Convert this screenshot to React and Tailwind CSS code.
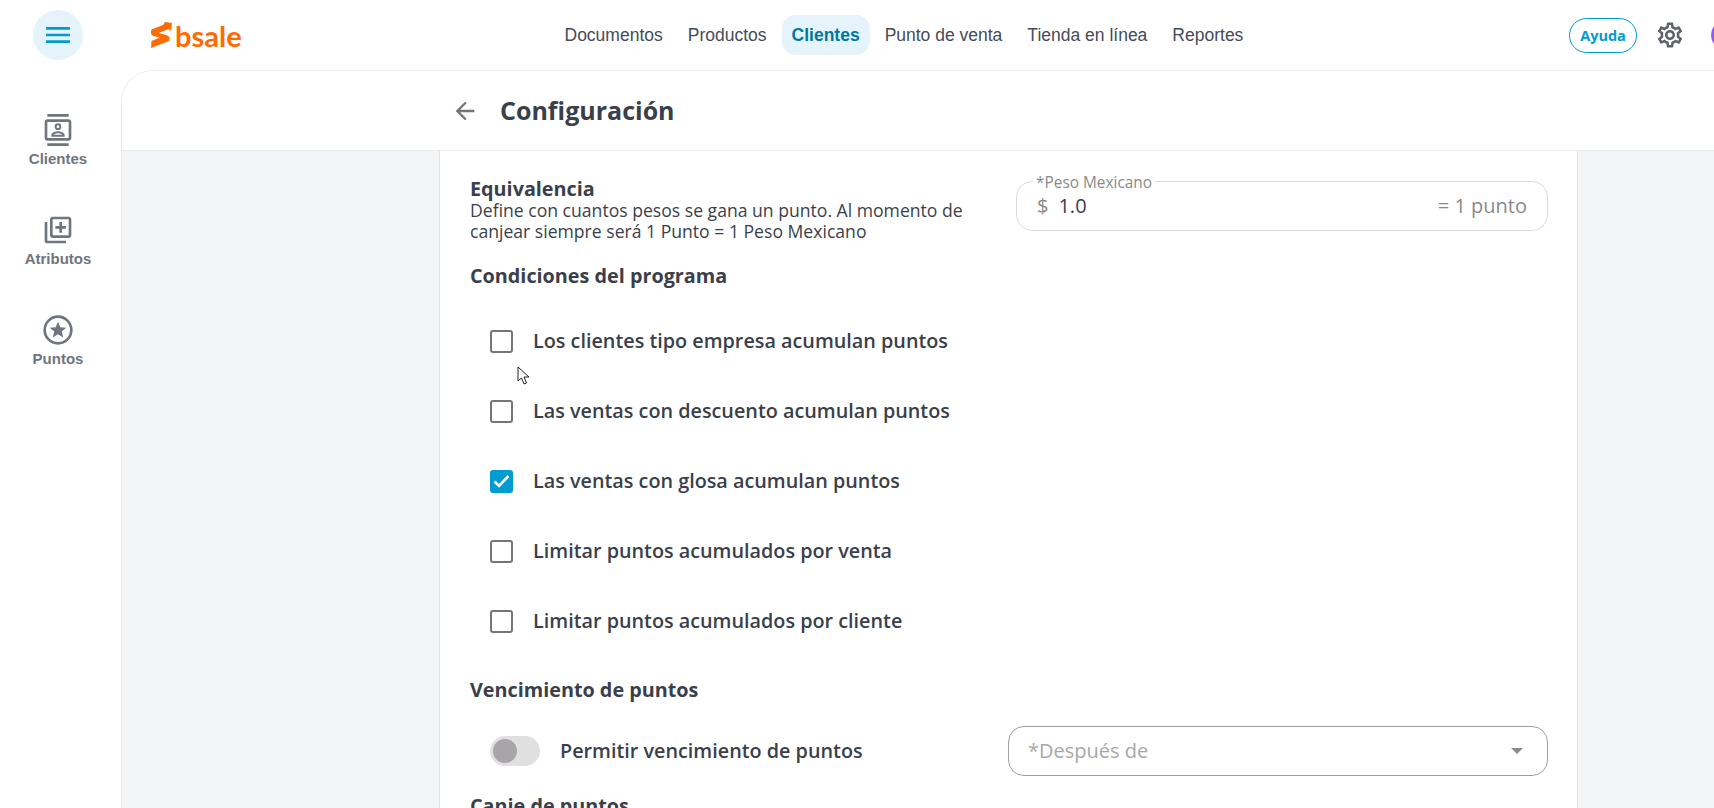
import React from 'react';
import { MdOutlineContacts, MdOutlineLibraryAdd, MdOutlineSettings, MdArrowBack, MdMenu } from 'react-icons/md';

const navItems = ['Documentos', 'Productos', 'Clientes', 'Punto de venta', 'Tienda en línea', 'Reportes'];

function PuntosIcon({ size }) {
  return (
    <svg width={size} height={size} viewBox="0 0 24 24" fill="none">
      <circle cx="12" cy="12" r="10" stroke="currentColor" strokeWidth="2" />
      <path d="M12 5.8 L13.7 10 L18.2 10.3 L14.8 13.2 L15.9 17.6 L12 15.2 L8.1 17.6 L9.2 13.2 L5.8 10.3 L10.3 10 Z" fill="currentColor" />
    </svg>
  );
}

const sideItems = [
  { label: 'Clientes', Icon: MdOutlineContacts },
  { label: 'Atributos', Icon: MdOutlineLibraryAdd },
  { label: 'Puntos', Icon: PuntosIcon },
];

const condiciones = [
  { label: 'Los clientes tipo empresa acumulan puntos', checked: false },
  { label: 'Las ventas con descuento acumulan puntos', checked: false },
  { label: 'Las ventas con glosa acumulan puntos', checked: true },
  { label: 'Limitar puntos acumulados por venta', checked: false },
  { label: 'Limitar puntos acumulados por cliente', checked: false },
];

function Checkbox({ checked }) {
  if (checked) {
    return (
      <span className="w-[23px] h-[23px] rounded-[3px] bg-[#009bd1] flex items-center justify-center shrink-0">
        <svg width="17" height="14" viewBox="0 0 17 14" fill="none">
          <path d="M1.5 7.5 L6 12 L15.5 2" stroke="white" strokeWidth="2.6" />
        </svg>
      </span>
    );
  }
  return <span className="w-[23px] h-[23px] rounded-[3px] border-2 border-[#757575] bg-white shrink-0"></span>;
}

export default function App() {
  return (
    <div className="h-screen w-full flex flex-col overflow-hidden bg-white relative font-['Open_Sans',sans-serif] text-[#3a3f4b]">
      {/* Barra superior */}
      <header className="h-[70px] shrink-0 flex items-center relative">
        <button className="w-[50px] h-[50px] ml-[33px] rounded-full bg-[#e5f4fa] flex items-center justify-center text-[#009bd1] shrink-0">
          <MdMenu size={32} />
        </button>
        <div className="ml-[67px] flex items-center w-[88px] shrink-0 text-[#ff6b00]">
          <svg width="22" height="26" viewBox="0 0 22 26" className="shrink-0">
            <path d="M13 3 L15 0 L22 1 L21 9 L18.5 7 L8.5 11 L16 13 Q20 14 19.5 17 L19 19 L1 26 L1.5 19 L10 15.5 L3.5 14 Q0.5 13 1 9.5 L1.5 7.5 Z" fill="currentColor" />
          </svg>
          <span className="ml-[3px] text-[29px] leading-none font-bold font-['Lato',sans-serif]">bsale</span>
        </div>
        <nav className="ml-[314px] flex items-center font-['Liberation_Sans',sans-serif] text-[17.5px] text-[#454b57]">
          {navItems.map((item) =>
            item === 'Clientes' ? (
              <span key={item} className="h-[40px] px-[10px] mx-[2.5px] rounded-[14px] bg-[#e5f4fa] flex items-center font-bold text-[#00789f]">
                {item}
              </span>
            ) : (
              <span key={item} className="px-[12.5px]">{item}</span>
            )
          )}
        </nav>
        <button className="absolute left-[1569px] top-[18px] w-[68px] h-[35px] rounded-full border border-[#009bd1] text-[#009bd1] text-[14.5px] font-bold flex items-center justify-center">
          Ayuda
        </button>
        <MdOutlineSettings className="absolute left-[1655px] top-[20px] text-[#5f6368]" size={30} />
        <span className="absolute left-[1711px] top-[20px] w-[30px] h-[30px] rounded-full bg-[#8b5cf6]"></span>
      </header>

      <div className="flex flex-1 min-h-0">
        {/* Menu lateral */}
        <aside className="w-[121px] shrink-0 flex flex-col items-center pt-[44px] pr-[5px] gap-[46px] font-['Liberation_Sans',sans-serif]">
          {sideItems.map(({ label, Icon }) => (
            <div key={label} className="w-full h-[54px] flex flex-col items-center text-[#70757d]">
              <Icon size={32} />
              <span className="mt-[4px] text-[15px] leading-[18px] font-bold">{label}</span>
            </div>
          ))}
        </aside>

        {/* Tarjeta principal */}
        <main className="flex-1 min-w-0 flex flex-col rounded-tl-[32px] border-l border-t border-[#e9eaec] overflow-hidden">
          <div className="h-[80px] shrink-0 border-b border-[#e9eaec] bg-white flex items-center pl-[329px]">
            <MdArrowBack size={28} className="text-[#757575]" />
            <h1 className="ml-[21px] text-[25px] font-bold">Configuración</h1>
          </div>
          <div className="flex-1 min-h-0 bg-[#f4f5f7] pl-[317px]">
            <section className="w-[1139px] h-full overflow-hidden bg-white border-x border-[#e0e0e0] pl-[30px] pr-[29px] pt-[27px]">
              <div className="flex justify-between">
                <div className="w-[500px]">
                  <h2 className="text-[19.8px] leading-[22px] font-bold">Equivalencia</h2>
                  <p className="text-[17.6px] leading-[21px]">
                    Define con cuantos pesos se gana un punto. Al momento de canjear siempre será 1 Punto = 1 Peso Mexicano
                  </p>
                </div>
                <div className="relative w-[532px] h-[50px] mt-[3px] rounded-[16px] border border-[#dcdcdc] flex items-center px-[20px] text-[20px]">
                  <span className="absolute left-[16px] -top-[7px] bg-white px-[3px] text-[15.4px] leading-[16px] text-[#8a8a8a]">*Peso Mexicano</span>
                  <span className="text-[#8a8a8a]">$</span>
                  <span className="ml-[10px] text-[#3a3f4b]">1.0</span>
                  <span className="ml-auto text-[#8a8a8a]">= 1 punto</span>
                </div>
              </div>

              <h2 className="mt-[22px] text-[19.8px] leading-[24px] font-bold">Condiciones del programa</h2>

              <div className="mt-[18px]">
                {condiciones.map((c) => (
                  <div key={c.label} className="h-[70px] flex items-center pl-[20px]">
                    <Checkbox checked={c.checked} />
                    <span className="ml-[20px] text-[19.8px] font-semibold">{c.label}</span>
                  </div>
                ))}
              </div>

              <h2 className="mt-[22px] text-[19.8px] leading-[24px] font-bold">Vencimiento de puntos</h2>

              <div className="mt-[24px] flex items-center justify-between h-[50px]">
                <div className="flex items-center pl-[20px]">
                  <span className="w-[50px] h-[30px] rounded-full bg-[#e0e0e0] flex items-center pl-[3px]">
                    <span className="w-[24px] h-[24px] rounded-full bg-[#a7a5a8]"></span>
                  </span>
                  <span className="ml-[20px] text-[19.8px] font-semibold">Permitir vencimiento de puntos</span>
                </div>
                <div className="w-[540px] h-[50px] rounded-[16px] border border-[#a0a0a0] flex items-center pl-[19px] pr-[24px] text-[20px] text-[#a8a8a8]">
                  *Después de
                  <span className="ml-auto w-0 h-0 border-x-[6px] border-x-transparent border-t-[6px] border-t-[#8a8a8a]"></span>
                </div>
              </div>

              <h2 className="mt-[18px] text-[19.8px] leading-[24px] font-bold">Canje de puntos</h2>
            </section>
          </div>
        </main>
      </div>

      {/* Cursor del mouse */}
      <svg className="absolute left-[517px] top-[366px]" width="14" height="20" viewBox="0 0 14 20">
        <path d="M1 1 L1 15 L4.5 12 L7 18 L9.5 17 L7 11 L12 11 Z" fill="white" stroke="#222" strokeWidth="1" />
      </svg>
    </div>
  );
}
